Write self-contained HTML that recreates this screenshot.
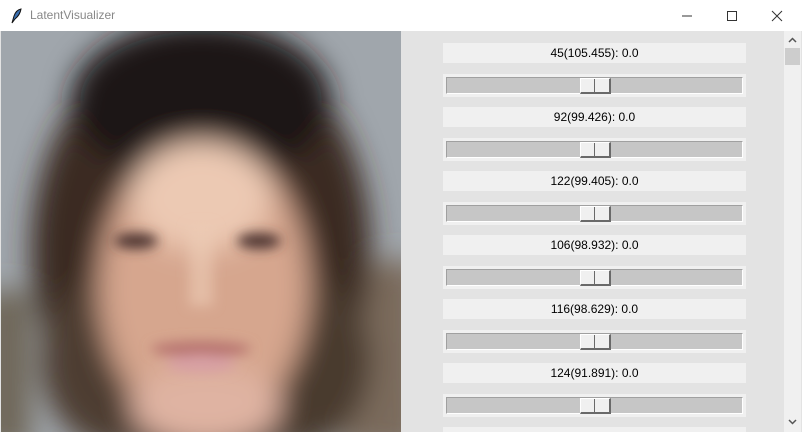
<!DOCTYPE html>
<html style="overflow:hidden;width:802px;height:432px"><head><style>
body{margin:0;width:802px;height:432px;overflow:hidden;background:#e3e3e3;font-family:"Liberation Sans",sans-serif;position:relative}
.title{position:absolute;left:0;top:0;width:802px;height:31px;background:#fff}
.title .t{position:absolute;left:30px;top:8px;font-size:12px;color:#888}
.img{position:absolute;left:1px;top:31px;width:400px;height:401px;overflow:hidden}
.lab{position:absolute;left:443px;width:303px;height:20px;background:#f0f0f0;font-size:12px;text-align:center;line-height:20px;color:#000}
.sf{position:absolute;left:443px;width:303px;height:23px;background:#f0f0f0}
.tr{position:absolute;left:3px;top:3px;width:295px;height:15px;background:#c6c6c6;border-top:1px solid #a0a0a0;border-left:1px solid #a0a0a0;border-right:1px solid #fff;border-bottom:1px solid #fff}
.th{position:absolute;left:133px;top:0;background:#f0f0f0;border-right:2px solid #696969;border-bottom:2px solid #696969;border-top:1px solid #fff;border-left:1px solid #fff;box-sizing:border-box;width:31px;height:16px}
.th:after{content:"";position:absolute;left:13px;top:0;width:1px;height:14px;background:#696969}
.sb{position:absolute;left:784px;top:31px;width:17px;height:401px;background:#f0f0f0}
</style></head><body>
<div class="title"><svg style="position:absolute;left:10px;top:8px" width="12" height="16" viewBox="0 0 12 16"><path d="M2 15 L4 8 Q6 2 11 1 Q10 7 5 11 Z" fill="#3a6fb0" stroke="#111" stroke-width="1"/></svg><span class="t">LatentVisualizer</span>
<svg style="position:absolute;left:680px;top:9px" width="110" height="14"><line x1="2" y1="7" x2="12" y2="7" stroke="#333"/><rect x="47.5" y="2.5" width="9" height="9" fill="none" stroke="#333"/><path d="M92 2 L102 12 M102 2 L92 12" stroke="#333"/></svg></div>
<div class="img"><svg width="400" height="401"><defs><filter id="b" x="-50%" y="-50%" width="200%" height="200%"><feGaussianBlur stdDeviation="14"/></filter><filter id="s"><feGaussianBlur stdDeviation="6"/></filter></defs>
<rect width="400" height="401" fill="#a0a6ac"/>
<g filter="url(#b)">
<rect x="340" y="230" width="80" height="190" fill="#7a6a5c"/>
<rect x="-20" y="260" width="50" height="160" fill="#6e6658"/>
<ellipse cx="200" cy="220" rx="170" ry="220" fill="#3a2c22"/>
<ellipse cx="200" cy="70" rx="130" ry="80" fill="#1e1714"/>
<ellipse cx="120" cy="330" rx="80" ry="90" fill="#4e3e30"/>
<ellipse cx="290" cy="330" rx="80" ry="90" fill="#4a3a2e"/>
<ellipse cx="203" cy="255" rx="105" ry="145" fill="#d6a68e"/>
<ellipse cx="200" cy="165" rx="70" ry="55" fill="#ecc9b3"/>
<ellipse cx="205" cy="375" rx="75" ry="40" fill="#dfb3a2"/>
</g>
<g filter="url(#s)">
<ellipse cx="135" cy="210" rx="22" ry="8" fill="#4e3632"/>
<ellipse cx="258" cy="210" rx="22" ry="8" fill="#4e3632"/>
<rect x="188" y="195" width="24" height="80" fill="#eccbb5" opacity=".6"/>
<ellipse cx="200" cy="318" rx="50" ry="8" fill="#b87470"/>
<ellipse cx="200" cy="333" rx="35" ry="9" fill="#d8a0a4"/>
</g></svg></div>
<div class="sb"><svg width="17" height="401"><path d="M5 11 L8.5 7.5 L12 11" stroke="#555" stroke-width="1.5" fill="none"/><rect x="1" y="17" width="15" height="17" fill="#cdcdcd"/><path d="M5 389 L8.5 392.5 L12 389" stroke="#555" stroke-width="1.5" fill="none"/></svg></div>
<div class="lab" style="top:43px">45(105.455): 0.0</div><div class="sf" style="top:74px"><div class="tr"><div class="th"></div></div></div>
<div class="lab" style="top:107px">92(99.426): 0.0</div><div class="sf" style="top:138px"><div class="tr"><div class="th"></div></div></div>
<div class="lab" style="top:171px">122(99.405): 0.0</div><div class="sf" style="top:202px"><div class="tr"><div class="th"></div></div></div>
<div class="lab" style="top:235px">106(98.932): 0.0</div><div class="sf" style="top:266px"><div class="tr"><div class="th"></div></div></div>
<div class="lab" style="top:299px">116(98.629): 0.0</div><div class="sf" style="top:330px"><div class="tr"><div class="th"></div></div></div>
<div class="lab" style="top:363px">124(91.891): 0.0</div><div class="sf" style="top:394px"><div class="tr"><div class="th"></div></div></div>
<div class="lab" style="top:427px;height:5px"></div>
</body></html>
